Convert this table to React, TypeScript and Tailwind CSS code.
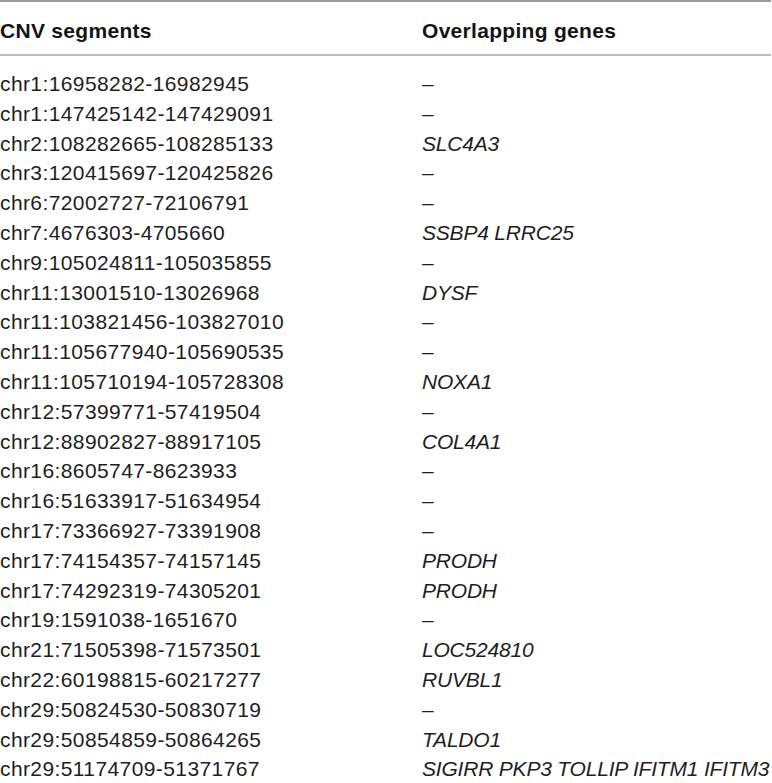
const rows: [string, string][] = [
  ["chr1:16958282-16982945", ""],
  ["chr1:147425142-147429091", ""],
  ["chr2:108282665-108285133", "SLC4A3"],
  ["chr3:120415697-120425826", ""],
  ["chr6:72002727-72106791", ""],
  ["chr7:4676303-4705660", "SSBP4 LRRC25"],
  ["chr9:105024811-105035855", ""],
  ["chr11:13001510-13026968", "DYSF"],
  ["chr11:103821456-103827010", ""],
  ["chr11:105677940-105690535", ""],
  ["chr11:105710194-105728308", "NOXA1"],
  ["chr12:57399771-57419504", ""],
  ["chr12:88902827-88917105", "COL4A1"],
  ["chr16:8605747-8623933", ""],
  ["chr16:51633917-51634954", ""],
  ["chr17:73366927-73391908", ""],
  ["chr17:74154357-74157145", "PRODH"],
  ["chr17:74292319-74305201", "PRODH"],
  ["chr19:1591038-1651670", ""],
  ["chr21:71505398-71573501", "LOC524810"],
  ["chr22:60198815-60217277", "RUVBL1"],
  ["chr29:50824530-50830719", ""],
  ["chr29:50854859-50864265", "TALDO1"],
  ["chr29:51174709-51371767", "SIGIRR PKP3 TOLLIP IFITM1 IFITM3"],
];

export default function App() {
  return (
    <div className="w-[772px] h-[783px] overflow-hidden bg-white font-['Liberation_Sans',Arial,sans-serif] text-[#1e1e1e]">
      <div className="w-[771px]">
        <div className="h-[2px] bg-[#9a9a9a]" />
        <div className="grid grid-cols-[422px_1fr] h-[52px] pt-[17px] text-[21px] leading-[24px] font-bold tracking-[0.3px] text-[#141414]">
          <div>CNV segments</div>
          <div>Overlapping genes</div>
        </div>
        <div className="h-[2px] bg-[#bdbdbd]" />
        <div className="pt-[13px] text-[21px] leading-[29.8px]">
          {rows.map(([seg, genes], i) => (
            <div key={i} className="grid grid-cols-[422px_1fr] whitespace-nowrap">
              <div className="tracking-[0.4px]">{seg}</div>
              <div className={genes ? "italic tracking-[-0.2px]" : ""}>{genes || "–"}</div>
            </div>
          ))}
        </div>
      </div>
    </div>
  );
}
